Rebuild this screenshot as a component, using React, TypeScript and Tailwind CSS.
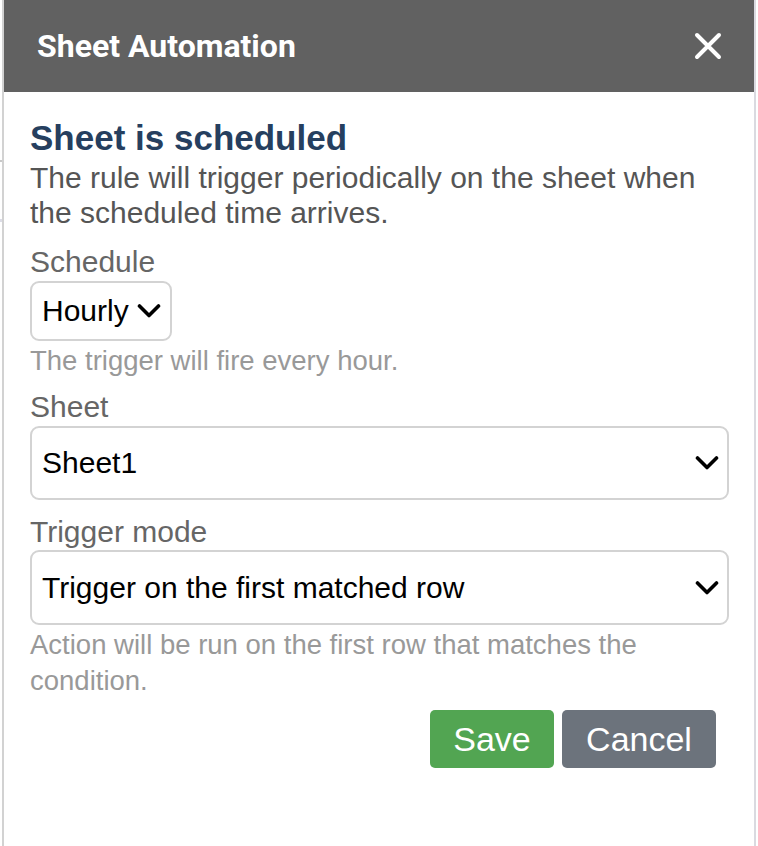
import React from 'react'

// Simple chevron used by the fake select boxes
function Chevron({ className = '' }: { className?: string }) {
  return (
    <svg viewBox="0 0 24 24" className={className} fill="none" stroke="currentColor" strokeWidth={3.6} strokeLinecap="round" strokeLinejoin="round">
      <path d="M2.5 7l9.5 9.5L21.5 7" />
    </svg>
  )
}

function CloseIcon() {
  return (
    <svg viewBox="0 0 28 28" className="w-[28px] h-[28px]" fill="none" stroke="white" strokeWidth={4} strokeLinecap="round">
      <path d="M3 3l22 22M25 3L3 25" />
    </svg>
  )
}

export default function App() {
  return (
    <div className="w-[758px] h-[846px] bg-white flex overflow-hidden" style={{ fontFamily: '"Liberation Sans", Arial, sans-serif' }}>
      {/* sliver of the page behind the dialog */}
      <div className="w-[2px] shrink-0 flex flex-col">
        <div className="h-[160px]" />
        <div className="h-[2px] bg-[#c9c9c9]" />
        <div className="h-[57px]" />
        <div className="h-[3px] bg-[#dcdce6]" />
      </div>

      <div className="w-[754px] shrink-0 h-full border-x-2 border-l-[#d2d2d2] border-r-[#dadae0] flex flex-col">
        <div className="h-[92px] bg-[#616161] flex items-center justify-between pl-[33px] pr-[32px]">
          <h1 className="text-white font-bold text-[32px] leading-none" style={{ fontFamily: 'Roboto, "Liberation Sans", sans-serif' }}>
            Sheet Automation
          </h1>
          <CloseIcon />
        </div>

        <div className="pl-[26px] pr-[25px] pt-[26px] flex flex-col">
          <h2 className="text-[35px] leading-[40px] font-bold text-[#263f5f]">Sheet is scheduled</h2>
          <p className="mt-[2px] text-[30px] leading-[35px] text-[#555555]">
            The rule will trigger periodically on the sheet when the scheduled time arrives.
          </p>

          <label className="mt-[14px] text-[30px] leading-[35px] text-[#666666]">Schedule</label>
          <div className="mt-[2px] w-[142px] h-[60px] border-2 border-[#d3d3d3] rounded-[9px] flex items-center pl-[10px] pr-[9px] justify-between text-black">
            <span className="text-[30px] leading-none">Hourly</span>
            <Chevron className="w-[24px] h-[24px]" />
          </div>
          <p className="mt-[3px] text-[27.5px] leading-[34px] text-[#999999]">The trigger will fire every hour.</p>

          <label className="mt-[11px] text-[30px] leading-[35px] text-[#666666]">Sheet</label>
          <div className="mt-[2px] h-[74px] border-2 border-[#d3d3d3] rounded-[9px] flex items-center pl-[10px] pr-[8px] justify-between text-black">
            <span className="text-[30px] leading-none">Sheet1</span>
            <Chevron className="w-[24px] h-[24px]" />
          </div>

          <label className="mt-[14px] text-[30px] leading-[35px] text-[#666666]">Trigger mode</label>
          <div className="mt-[1px] h-[75px] border-2 border-[#d3d3d3] rounded-[9px] flex items-center pl-[10px] pr-[8px] justify-between text-black">
            <span className="text-[30px] leading-none">Trigger on the first matched row</span>
            <Chevron className="w-[24px] h-[24px]" />
          </div>
          <p className="mt-[2px] text-[27.5px] leading-[36px] text-[#999999]">
            Action will be run on the first row that matches the condition.
          </p>

          <div className="mt-[11px] flex justify-end gap-[8px] pr-[13px]">
            <button className="w-[124px] h-[58px] rounded-[5px] bg-[#52a552] text-white text-[34px] leading-none">Save</button>
            <button className="w-[154px] h-[58px] rounded-[5px] bg-[#6c737c] text-white text-[34px] leading-none">Cancel</button>
          </div>
        </div>
      </div>
    </div>
  )
}
